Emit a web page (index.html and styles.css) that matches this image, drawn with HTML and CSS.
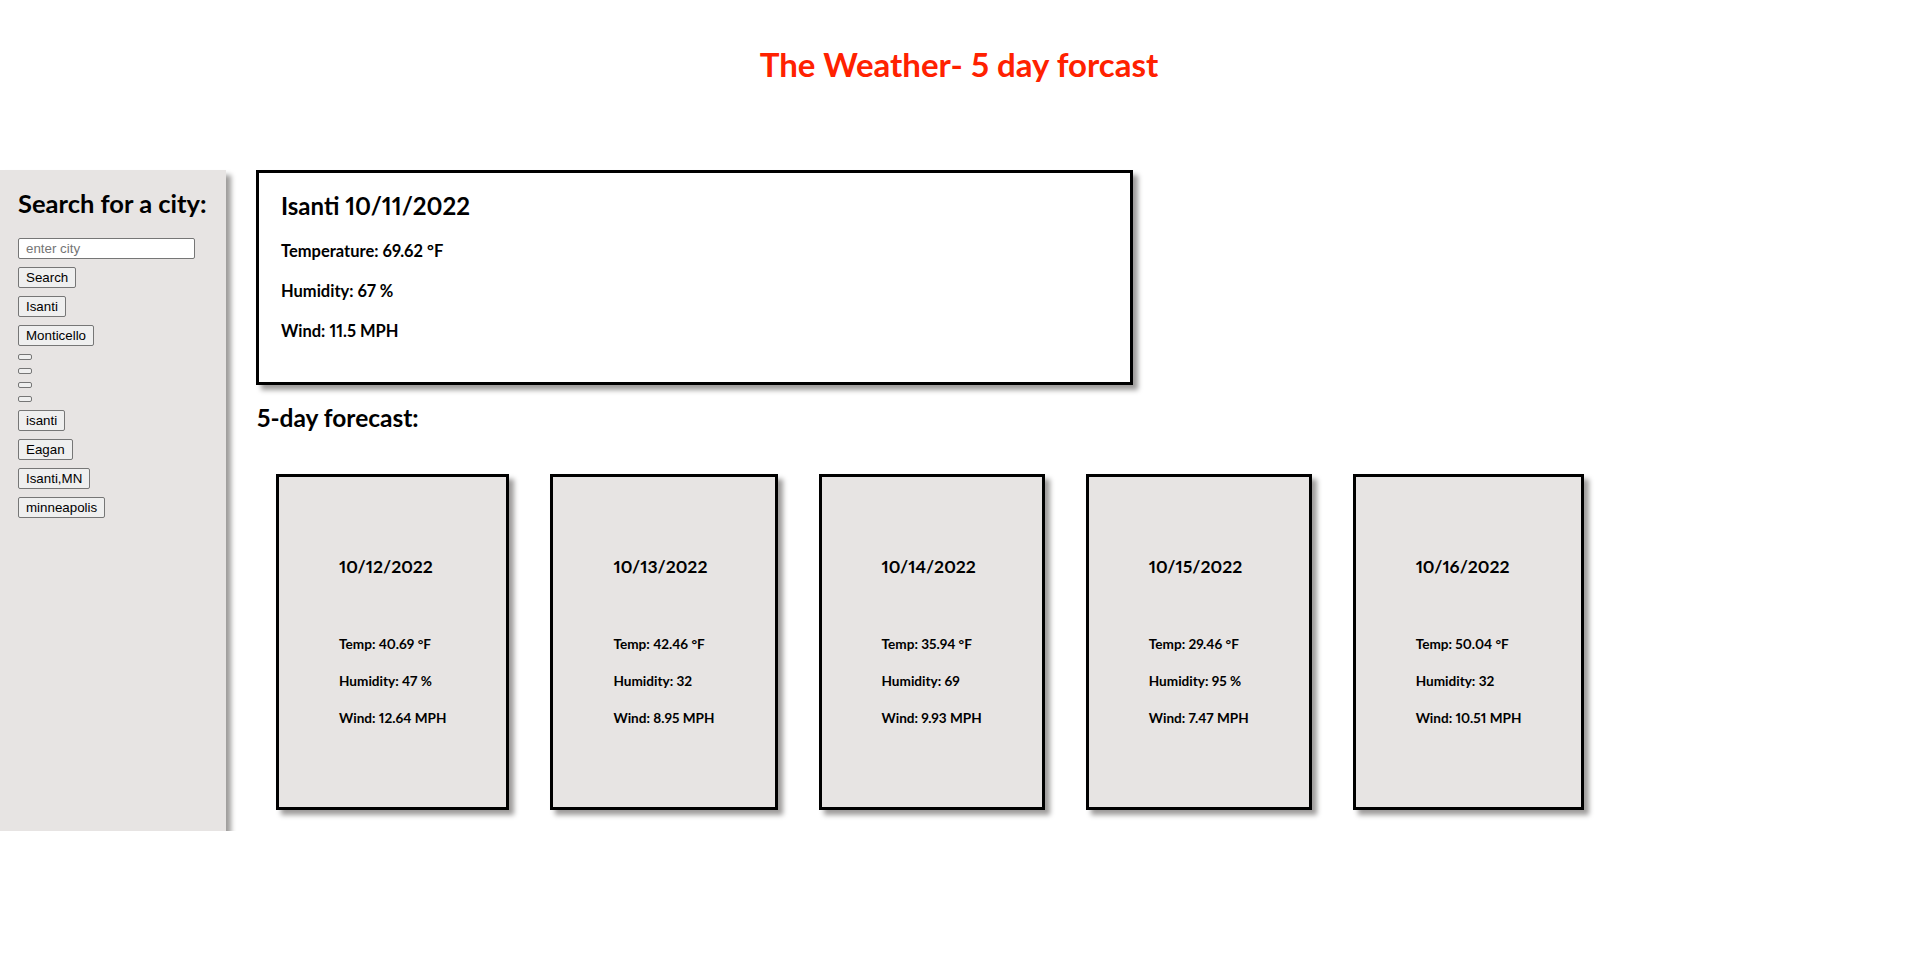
FILE: index.html
```html
<!DOCTYPE html>
<html lang="en">
<head>
    <meta charset="UTF-8">
    <meta name="viewport" content="width=device-width, initial-scale=1.0">
    <title>Weather Dashboard</title>
    <link rel="stylesheet" href="styles.css">
</head>
<body>

<header>
    <h1>The Weather- 5 day forcast</h1>
</header>

<main>
    <aside class="search-panel">
        <h2>Search for a city:</h2>
        <input type="text" id="city-input" placeholder="enter city">
        <button id="search-btn">Search</button>
        <div id="history">
            <button>Isanti</button>
            <button>Monticello</button>
            <button></button>
            <button></button>
            <button></button>
            <button></button>
            <button>isanti</button>
            <button>Eagan</button>
            <button>Isanti,MN</button>
            <button>minneapolis</button>
        </div>
    </aside>

    <section class="results">
        <div class="current">
            <h2>Isanti 10/11/2022</h2>
            <p>Temperature: 69.62 °F</p>
            <p>Humidity: 67 %</p>
            <p>Wind: 11.5 MPH</p>
        </div>

        <h2 class="forecast-title">5-day forecast:</h2>

        <div class="forecast">
            <div class="card">
                <h3>10/12/2022</h3>
                <h5>Temp: 40.69 °F</h5>
                <h5>Humidity: 47 %</h5>
                <h5>Wind: 12.64 MPH</h5>
            </div>
            <div class="card">
                <h3>10/13/2022</h3>
                <h5>Temp: 42.46 °F</h5>
                <h5>Humidity: 32</h5>
                <h5>Wind: 8.95 MPH</h5>
            </div>
            <div class="card">
                <h3>10/14/2022</h3>
                <h5>Temp: 35.94 °F</h5>
                <h5>Humidity: 69</h5>
                <h5>Wind: 9.93 MPH</h5>
            </div>
            <div class="card">
                <h3>10/15/2022</h3>
                <h5>Temp: 29.46 °F</h5>
                <h5>Humidity: 95 %</h5>
                <h5>Wind: 7.47 MPH</h5>
            </div>
            <div class="card">
                <h3>10/16/2022</h3>
                <h5>Temp: 50.04 °F</h5>
                <h5>Humidity: 32</h5>
                <h5>Wind: 10.51 MPH</h5>
            </div>
        </div>
    </section>
</main>

</body>
</html>
```

FILE: styles.css
```css
* {
    box-sizing: border-box;
}

body {
    margin: 0;
    font-family: Lato, "Open Sans", sans-serif;
    font-variant-numeric: proportional-nums;
    color: #000;
    background-color: #fff;
}

header h1 {
    margin: 44px 0 86px;
    font-size: 33px;
    line-height: 40px;
    text-align: center;
    color: #ff2100;
}

main {
    display: flex;
    align-items: flex-start;
}

/* left column */

.search-panel {
    width: 226px;
    height: 661px;
    flex-shrink: 0;
    padding: 0 18px;
    background-color: #e7e4e3;
    box-shadow: 5px 5px 5px #9e9c9b;
}

.search-panel h2 {
    margin: 19px 0 21px;
    font-size: 25.5px;
    line-height: 28px;
    white-space: nowrap;
}

.search-panel input {
    display: block;
    width: 177px;
    height: 21px;
    padding: 1px 7px;
    border: 1px solid #767676;
    border-radius: 2px;
    font: 13.33px "Liberation Sans", Arial, sans-serif;
}

.search-panel input::placeholder {
    color: #757575;
}

.search-panel button {
    display: block;
    margin-top: 8px;
    padding: 1px 7px;
    border: 1px solid #767676;
    border-radius: 2px;
    background-color: #efefef;
    font: 13.33px "Liberation Sans", Arial, sans-serif;
    color: #000;
    line-height: 17px;
}

.search-panel button:empty {
    width: 14px;
    height: 6px;
    padding: 0;
    line-height: 0;
}

/* right column */

.results {
    margin-left: 30px;
}

.current {
    width: 877px;
    padding: 0 22px 21px;
    border: 3px solid #000;
    background-color: #fff;
    box-shadow: 5px 5px 5px #9e9c9b;
}

.current h2 {
    margin: 19px 0 21px;
    font-size: 24px;
    line-height: 28px;
}

.current p {
    margin: 20px 0;
    font-size: 16.5px;
    line-height: 20px;
    font-weight: bold;
}

.forecast-title {
    margin: 20px 0 0 1px;
    font-size: 24.5px;
    line-height: 26px;
}

.forecast {
    display: flex;
    gap: 41px;
    margin: 43px 0 0 20px;
}

.card {
    padding: 60px;
    border: 3px solid #000;
    background-color: #e7e4e3;
    box-shadow: 5px 5px 5px #9e9c9b;
}

.card h3 {
    margin: 19px 0 58px;
    font-size: 17.5px;
    line-height: 22px;
}

.card h5 {
    margin: 21px 0;
    font-size: 13.6px;
    line-height: 16px;
    white-space: nowrap;
}
```
